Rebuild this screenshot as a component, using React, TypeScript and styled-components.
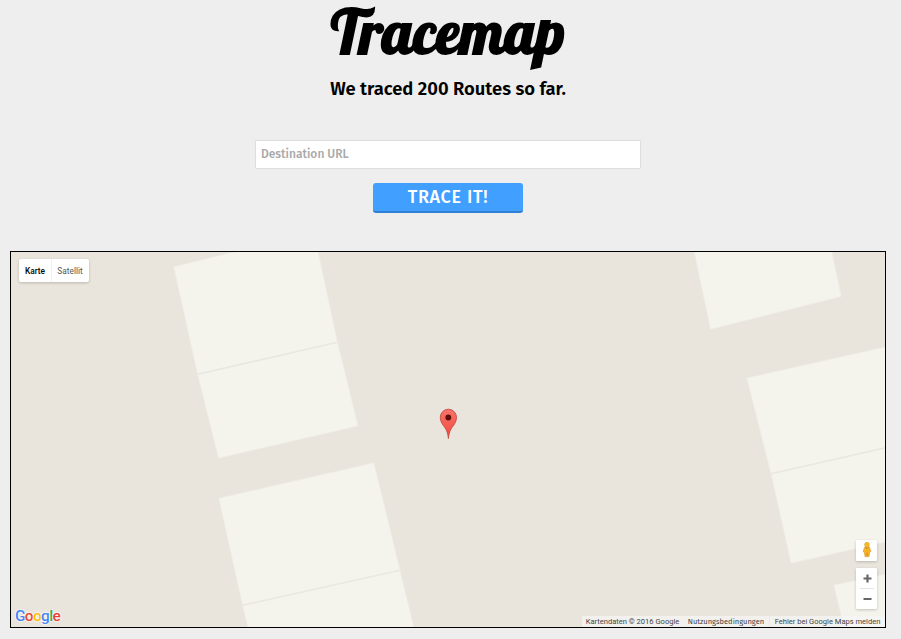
import React from "react";
import styled, { createGlobalStyle } from "styled-components";

const GlobalStyle = createGlobalStyle`
  *, *::before, *::after { box-sizing: border-box; }
  html, body { margin: 0; padding: 0; background: #eeeeee; }
  body { font-family: "Fira Sans", "Noto Sans", sans-serif; color: #000; }
`;

const Page = styled.main`
  width: 896px;
  height: 639px;
  padding: 0 10px;
  display: flex;
  flex-direction: column;
  align-items: center;
`;

const Title = styled.h1`
  margin: 0;
  height: 77px;
  font: 700 60px/63px "Lobster", "DejaVu Serif", serif;
`;

const Subtitle = styled.h2`
  margin: 0;
  height: 63px;
  font: 600 18.4px/24px "Fira Sans", "Noto Sans", sans-serif;
`;

const Form = styled.form`
  display: flex;
  flex-direction: column;
  align-items: center;
  gap: 14px;
  height: 111px;
`;

const UrlInput = styled.input`
  width: 386px;
  height: 29px;
  margin: 0;
  padding: 0 5px 2px;
  border: 1px solid #dddddd;
  border-radius: 1px;
  background: #fff;
  outline: none;
  font: 500 12px "Fira Sans", "Noto Sans", sans-serif;
  &::placeholder { color: #a9a9a9; opacity: 1; }
`;

const TraceButton = styled.button`
  width: 150px;
  height: 30px;
  padding: 0;
  border: 0;
  border-bottom: 2px solid #2f80d5;
  border-radius: 3px;
  background: #409fff;
  color: #fff;
  font: 500 18px/27px "Fira Sans", "Noto Sans", sans-serif;
  letter-spacing: 0.7px;
`;

const MapFrame = styled.section`
  position: relative;
  width: 876px;
  height: 377px;
  border: 1px solid #000;
  background: #e9e5dc;
  overflow: hidden;
`;

const MapCanvas = styled.svg`
  display: block;
  width: 874px;
  height: 375px;
`;

const MapTypes = styled.div`
  position: absolute;
  left: 8px;
  top: 7px;
  display: flex;
  height: 23px;
  border-radius: 2px;
  background: #fff;
  box-shadow: 0 1px 3px rgba(0, 0, 0, 0.2);
`;

const MapType = styled.div<{ $active?: boolean; $width: number }>`
  width: ${(p) => p.$width}px;
  display: flex;
  align-items: center;
  justify-content: center;
  font: ${(p) => (p.$active ? 500 : 400)} 8.3px Roboto, sans-serif;
  color: ${(p) => (p.$active ? "#000" : "#565656")};
  & + & { border-left: 1px solid #f1f1f1; padding-right: 1px; }
`;

const Controls = styled.div`
  position: absolute;
  right: 8px;
  top: 288px;
  display: flex;
  flex-direction: column;
  gap: 7px;
`;

const Control = styled.div<{ $height: number }>`
  width: 21px;
  height: ${(p) => p.$height}px;
  border-radius: 1px;
  background: #fff;
  box-shadow: 0 1px 3px rgba(0, 0, 0, 0.2);
  svg { display: block; }
`;

const Logo = styled.div`
  position: absolute;
  left: 4px;
  bottom: 1px;
  font: 500 15.5px/20px Roboto, sans-serif;
  letter-spacing: -0.7px;
  text-shadow: 0 0 1px #fff, 0 0 2px #fff, 0 0 2px #fff;
`;

const Letter = styled.span<{ $color: string }>`
  color: ${(p) => p.$color};
`;

const Legal = styled.div`
  position: absolute;
  right: 0;
  bottom: 0;
  display: flex;
  height: 11px;
  font: 400 7.55px/11px Roboto, sans-serif;
  color: #444;
`;

const LegalItem = styled.span<{ $width: number }>`
  width: ${(p) => p.$width}px;
  display: flex;
  justify-content: center;
  white-space: nowrap;
  background: rgba(245, 245, 245, 0.72);
  &:nth-child(2) { font-family: "Fira Sans", Roboto, sans-serif; }
  &:last-child { border-left: 1px solid rgba(232, 228, 221, 0.6); }
`;

const BUILDINGS = [
  "173.7,266.7 238,251 318,251 337.5,342 358,426 218.5,458.3 197.5,374",
  "218.7,498.2 374,462.7 400,570 414,628 248,628 242.5,605",
  "694,251 831.7,251 841.3,296.5 710.5,329.3",
  "746.7,378 886,346.7 886,542 791,563.3 771,474",
  "833.7,585 886,574 886,628 844,628",
];

const WALLS = [
  [197.5, 374.3, 337.5, 342.3],
  [242.5, 605.3, 400, 570.3],
  [771, 473.7, 886, 447.7],
];

const LOGO: [string, string][] = [
  ["G", "#4285f4"],
  ["o", "#ea4335"],
  ["o", "#fbbc05"],
  ["g", "#4285f4"],
  ["l", "#34a853"],
  ["e", "#ea4335"],
];

function Terrain() {
  return (
    <MapCanvas viewBox="11 252 874 375">
      <defs>
        <linearGradient id="pin" x1="0" y1="0" x2="0" y2="1">
          <stop offset="0" stopColor="#f7746b" />
          <stop offset="1" stopColor="#f2483c" />
        </linearGradient>
      </defs>
      {BUILDINGS.map((points) => (
        <polygon key={points} points={points} fill="#f4f3ec" stroke="#ecebe4" strokeWidth="0.8" />
      ))}
      {WALLS.map(([x1, y1, x2, y2]) => (
        <line key={x1} x1={x1} y1={y1} x2={x2} y2={y2} stroke="#e9e7e3" strokeWidth="1.6" />
      ))}
      <path
        d="M448.4 438.5C447.8 431.5 445.5 428.3 443 425C441.2 422.4 440.3 420 440.3 417.3A8.1 8.1 0 0 1 456.5 417.3C456.5 420 455.6 422.4 453.8 425C451.3 428.3 449 431.5 448.4 438.5Z"
        fill="url(#pin)"
        stroke="#c8483f"
        strokeWidth="0.9"
      />
      <circle cx="448.3" cy="417.5" r="2.9" fill="#5c0f0b" />
    </MapCanvas>
  );
}

export default function App() {
  return (
    <>
      <GlobalStyle />
      <Page>
        <Title>Tracemap</Title>
        <Subtitle>We traced 200 Routes so far.</Subtitle>
        <Form onSubmit={(e) => e.preventDefault()}>
          <UrlInput placeholder="Destination URL" />
          <TraceButton type="submit">TRACE IT!</TraceButton>
        </Form>
        <MapFrame>
          <Terrain />
          <MapTypes>
            <MapType $active $width={32}>Karte</MapType>
            <MapType $width={38}>Satellit</MapType>
          </MapTypes>
          <Controls>
            <Control $height={21}>
              <svg width="21" height="21" viewBox="0 0 21 21">
                <path d="M8.8 6.8H13.2L14.9 11.4L13.6 12.4L13 16.6H9L8.4 12.4L7.1 11.4Z" fill="#f5b323" stroke="#d9a03f" strokeWidth=".7" />
                <circle cx="11" cy="4.7" r="2.4" fill="#f8b91f" stroke="#dca63c" strokeWidth=".6" />
                <path d="M9.4 7.4L11 8.8L12.6 7.4M11 12.5V16.5" fill="none" stroke="#d7872d" strokeWidth=".9" />
              </svg>
            </Control>
            <Control $height={41}>
              <svg width="21" height="41" viewBox="0 0 21 41">
                <path d="M7.5 10.5H15.5M11.5 6.5V14.5M7.5 31H15.5" stroke="#666" strokeWidth="2.2" />
                <path d="M4 20.5H18" stroke="#e4e4e4" />
              </svg>
            </Control>
          </Controls>
          <Logo>
            {LOGO.map(([char, color], i) => (
              <Letter key={i} $color={color}>{char}</Letter>
            ))}
          </Logo>
          <Legal>
            <LegalItem $width={101}>Kartendaten © 2016 Google</LegalItem>
            <LegalItem $width={86}>Nutzungsbedingungen</LegalItem>
            <LegalItem $width={116}>Fehler bei Google Maps melden</LegalItem>
          </Legal>
        </MapFrame>
      </Page>
    </>
  );
}
